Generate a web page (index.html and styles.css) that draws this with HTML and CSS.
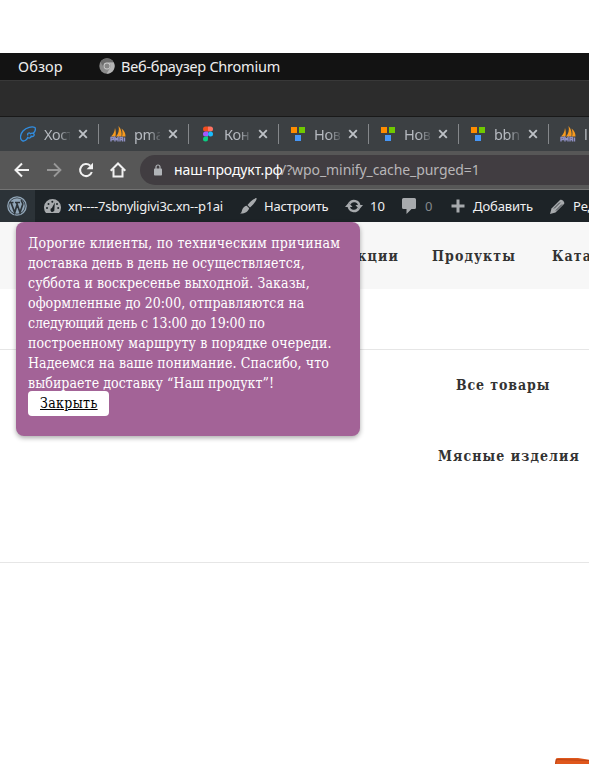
FILE: index.html
```html
<!DOCTYPE html>
<html lang="ru">
<head>
<meta charset="utf-8">
<title>Наш продукт</title>
<link rel="stylesheet" href="styles.css">
</head>
<body>
<svg width="0" height="0" class="defs">
  <symbol id="close" viewBox="0 0 10 10"><path d="M1.200 1.200 8.800 8.800M8.800 1.200 1.200 8.800" stroke="#bdc1c6" stroke-width="1.900"/></symbol>
  <symbol id="blocks" viewBox="0 0 16 16"><path fill="#ff8c00" d="M1 1h6v6H1z"/><path fill="#70c900" d="M9 1h6v6H9z"/><path fill="#4696f5" d="M5 9h6v6H5z"/></symbol>
  <symbol id="pma" viewBox="0 0 16 16"><path fill="#f79a1e" d="M1 10.500C3.500 8 4.500 6 5 2c1 3 1 6 .5 8.500zM6 10.500C8.500 8 9.500 4 8.500 0c3 3 3.500 7 3 10.500zM12 10.500c.8-3 .6-5-.5-8 3 2 4 5 4 8z"/><path d="M1 15.500V11.500h2.500v2H1m4 2V11.500l1.500 2L8 11.500v4m2 0v-4h2.500v4M10 13.500h2.500M14.500 11.500v4" fill="none" stroke="#8f8fc4" stroke-width="1.400"/></symbol>
</svg>
<header class="desktop">
  <span class="overview">Обзор</span>
  <svg class="chromium" viewBox="0 0 16 16"><circle cx="8" cy="8" r="7.700" fill="#8b8b8b"/><path fill="#6c6c6c" d="M1.400 4A7.700 7.700 0 0 1 14.700 4.500H8A3.500 3.500 0 0 0 4.800 9.500z"/><path fill="#b5b5b5" d="M14.700 4.500A7.700 7.700 0 0 1 7.600 15.700L11 10A3.500 3.500 0 0 0 9 4.500z"/><circle cx="8" cy="8" r="3.400" fill="#ccc"/><circle cx="8" cy="8" r="2.500" fill="#858585"/></svg>
  <span class="app">Веб-браузер Chromium</span>
</header>
<div class="titlebar"></div>
<div class="tabs">
  <div class="tab"><svg class="fav" viewBox="0 0 16 16"><path fill="none" stroke="#318ee2" stroke-width="1.300" stroke-linejoin="round" d="M8 9.500C6.800 7.500 9 6 10.500 7.800 12 6.500 15 7.500 14 9.500c-.6 1.200-2 1.200-3 .6.300 2-2.200 2.600-3.200 1.200C7 14 4.500 15.500 2.500 14.800-.5 13.500 0 8.500 3 5c3.500-3.800 9-4.800 12-3.500.8 2-.2 4.500-1.700 5.800"/></svg><span class="name">Хост</span><svg class="x"><use href="#close"/></svg></div>
  <div class="tab"><svg class="fav"><use href="#pma"/></svg><span class="name">pma</span><svg class="x"><use href="#close"/></svg></div>
  <div class="tab"><svg class="fav" viewBox="0 0 16 16"><path fill="#f24e1e" d="M8 .5H5.500a2.500 2.500 0 0 0 0 5H8z"/><path fill="#ff7262" d="M8 .5h2.500a2.500 2.500 0 0 1 0 5H8z"/><path fill="#a259ff" d="M8 5.500H5.500a2.500 2.500 0 0 0 0 5H8z"/><circle cx="10.500" cy="8" r="2.500" fill="#1abcfe"/><path fill="#0acf83" d="M8 10.500H5.500A2.500 2.500 0 1 0 8 13z"/></svg><span class="name">Кон</span><svg class="x"><use href="#close"/></svg></div>
  <div class="tab"><svg class="fav"><use href="#blocks"/></svg><span class="name">Нов</span><svg class="x"><use href="#close"/></svg></div>
  <div class="tab"><svg class="fav"><use href="#blocks"/></svg><span class="name">Нов</span><svg class="x"><use href="#close"/></svg></div>
  <div class="tab"><svg class="fav"><use href="#blocks"/></svg><span class="name">bbn</span><svg class="x"><use href="#close"/></svg></div>
  <div class="tab"><svg class="fav"><use href="#pma"/></svg><span class="name">l</span></div>
</div>
<div class="toolbar">
  <svg class="tool" viewBox="0 0 16 16"><path d="M15 8H2M8 1.500 1.500 8 8 14.500" fill="none" stroke="#f1f1f1" stroke-width="2"/></svg>
  <svg class="tool" viewBox="0 0 16 16"><path d="M1 8h13M8 1.500 14.500 8 8 14.500" fill="none" stroke="#989898" stroke-width="1.800"/></svg>
  <svg class="tool" viewBox="0 0 16 16"><path d="M13.800 10A6 6 0 1 1 12.300 3.800" fill="none" stroke="#f1f1f1" stroke-width="2"/><path fill="#f1f1f1" d="M15 .8v6.400H8.600z"/></svg>
  <svg class="tool" viewBox="0 0 16 16"><path d="M.7 8.700 8 1.500l7.300 7.200M3.500 7v7.500h9V7" fill="none" stroke="#f1f1f1" stroke-width="2"/></svg>
  <div class="address"><svg class="lock" viewBox="0 0 8 12"><rect y="4.500" width="8" height="7" rx=".8" fill="#b1b4b8"/><path d="M2 5V3a2 2 0 0 1 4 0v2" fill="none" stroke="#b1b4b8" stroke-width="1.200"/></svg><span class="host">наш-продукт.рф</span><span class="path">/?wpo_minify_cache_purged=1</span></div>
</div>
<nav class="admin">
  <div class="wp"><svg viewBox="0 0 20 20"><circle cx="10" cy="10" r="9.200" fill="none" stroke="#91a6b8" stroke-width="1.300"/><circle cx="10" cy="10" r="7.800" fill="#91a6b8"/><path d="M2.500 6.500h4M8 6.500h5M4 6.500l3.700 10L10 9M9.500 6.500l3.500 10 2.700-8c.5-2-1.700-2.300-1.200-4.500" fill="none" stroke="#2c3338" stroke-width="1.700"/></svg></div>
  <svg class="gauge" viewBox="0 0 17 14"><path fill="#a7aaad" d="M2 14A8.500 8.500 0 1 1 15 14z"/><path fill="#1d2327" d="m10.800 3.500-.4 7a2 2 0 1 1-2.500-1.500z"/><g fill="#1d2327"><circle cx="3" cy="9" r="1"/><circle cx="4.500" cy="5" r="1"/><circle cx="8.300" cy="2.700" r="1"/><circle cx="13" cy="5" r="1"/><circle cx="14.200" cy="9" r="1"/></g></svg>
  <span class="site">xn----7sbnyligivi3c.xn--p1ai</span>
  <svg class="brush" viewBox="0 0 17 16"><path fill="#a7aaad" d="M16.500.3c1 1-3.500 7-6.500 9.200L7.500 7C10 3.500 15.500-.8 16.500.3M6.700 7.800l2.500 2.500C8 14 4 16 0 15.500c2-1 1.500-2.500 2.500-4.500 1-2 2.500-3 4.200-3.200"/></svg>
  <span class="customize">Настроить</span>
  <svg class="update" viewBox="0 0 18 14"><path fill="none" stroke="#a7aaad" stroke-width="2.400" d="M4.500 4.500A5.300 5.300 0 0 1 14.300 7M13.500 9.500A5.300 5.300 0 0 1 3.700 7"/><path fill="#a7aaad" d="M10.500 6H18l-3.800 4.500zM0 8h7.500L3.800 3.500z"/></svg>
  <span class="count">10</span>
  <svg class="comment" viewBox="0 0 14 16"><path fill="#a7aaad" d="M1.500 0h11A1.500 1.500 0 0 1 14 1.500v8a1.500 1.500 0 0 1-1.500 1.500H9.500L4.500 16v-5h-3A1.500 1.500 0 0 1 0 9.500v-8A1.500 1.500 0 0 1 1.500 0"/></svg>
  <span class="zero">0</span>
  <svg class="plus" viewBox="0 0 14 14"><path stroke="#a7aaad" stroke-width="3" d="M7 .5v13M.5 7h13"/></svg>
  <span class="add">Добавить</span>
  <svg class="pencil" viewBox="0 0 15 15"><path fill="#a7aaad" d="M10 1c1.500-1.500 5.500 2 4 4L5.500 13.500 0 15l1.500-5.500z"/><path d="m4 9.500 6-6m-4 8 6-6" stroke="#1d2327" stroke-width=".8"/></svg>
  <span class="edit">Ред</span>
</nav>
<main class="site-page">
  <nav class="menu"><a class="promo">Акции</a><a class="products">Продукты</a><a class="catalog">Каталог</a></nav>
  <div class="spacer"></div>
  <section class="categories"><a class="all">Все товары</a><a class="meat">Мясные изделия</a></section>
  <section class="goods"><svg viewBox="0 0 35 7"><path fill="#df571c" d="M0 7 .8 2Q1 1 3 1h20l12 2v4z"/><path fill="#bd4515" d="M0 7 1 2l33 1v1L2 3 1 7z"/></svg></section>
  <aside class="notice">
    <p><span class="l1">Дорогие клиенты, по техническим причинам</span><span class="l2">доставка день в день не осуществляется,</span><span class="l3">суббота и воскресенье выходной. Заказы,</span><span class="l4">оформленные до 20:00, отправляются на</span><span class="l5">следующий день с 13:00 до 19:00 по</span><span class="l6">построенному маршруту в порядке очереди.</span><span class="l7">Надеемся на ваше понимание. Спасибо, что</span><span class="l8">выбираете доставку “Наш продукт”!</span></p>
    <a class="dismiss">Закрыть</a>
  </aside>
</main>
</body>
</html>
```
FILE: styles.css
```css
* { box-sizing: border-box; }
body { margin: 0; padding-top: 53px; width: 589px; height: 764px; overflow: hidden; background: #fff; font-family: "Noto Sans", sans-serif; white-space: nowrap; }
.defs { position: absolute; }
svg { flex: none; display: block; }
.desktop { height: 28px; display: flex; align-items: center; padding-left: 18px; background: #131313; border-bottom: 1px solid #383838; color: #eee; font-size: 14.500px; }
.desktop span { padding-bottom: 2px; }
.overview { width: 81px; letter-spacing: .1px; }
.app { letter-spacing: -.23px; }
.chromium { width: 16px; height: 16px; margin: -2px 6px 0 0; }
.titlebar { height: 36px; background: #2c2c2c; border-bottom: 1px solid #191919; }
.tabs { height: 34px; display: flex; padding-left: 9px; background: #3c4043; overflow: hidden; }
.tab { width: 90px; flex: none; display: flex; align-items: center; padding-left: 11px; position: relative; }
.tab::after { content: ""; position: absolute; right: 0; top: 7px; width: 1px; height: 20px; background: #85888b; }
.fav { width: 16px; height: 16px; margin-right: 8px; }
.name { width: 26px; overflow: hidden; color: #b6bac0; font-size: 14.500px; letter-spacing: -.3px; -webkit-mask-image: linear-gradient(90deg, #000 55%, #0003); mask-image: linear-gradient(90deg, #000 55%, #0003); }
.x { width: 10px; height: 10px; margin-left: 8px; }
.toolbar { height: 39px; display: flex; align-items: center; padding-left: 14px; background: #575757; border-bottom: 1px solid #737373; }
.tool { width: 16px; height: 16px; margin-right: 16px; }
.address { margin-left: -2px; height: 30px; width: 449px; flex: none; display: flex; align-items: center; padding-left: 14px; border-radius: 15px 0 0 15px; background: #413d41; font-size: 14px; }
.address span { padding-bottom: 2px; }
.lock { width: 8px; height: 12px; margin-right: 12px; }
.host { color: #fff; width: 107px; letter-spacing: -.1px; }
.path { color: #b8b6b8; letter-spacing: -.08px; }
.admin { height: 32px; display: flex; align-items: center; background: #1d2327; color: #f0f0f1; font-size: 13px; overflow: hidden; }
.admin > * { flex: none; }
.wp { width: 35px; height: 32px; padding: 6px 0 0 7px; background: #2c3338; margin-right: 9px; }
.wp svg { width: 20px; height: 20px; }
.gauge { width: 17px; height: 14px; margin-right: 7px; }
.site { width: 172px; letter-spacing: -.27px; }
.brush { width: 17px; height: 16px; margin-right: 7px; }
.customize { width: 81px; letter-spacing: -.2px; }
.update { width: 18px; height: 14px; margin-right: 7px; }
.count { width: 32px; }
.comment { width: 14px; height: 16px; margin-right: 9px; }
.zero { width: 26px; color: #83878b; }
.plus { width: 14px; height: 14px; margin-right: 8px; }
.add { width: 77px; letter-spacing: -.1px; }
.pencil { width: 15px; height: 15px; margin-right: 8px; }
.site-page { position: relative; font-family: "DejaVu Serif", serif; }
.menu { height: 67px; display: flex; align-items: center; background: #f7f7f7; padding-left: 346px; overflow: hidden; }
.menu a, .categories a { flex: none; color: #333; font-weight: 700; font-size: 14px; letter-spacing: 1.100px; font-stretch: condensed; font-family: "DejaVu Serif Condensed", "DejaVu Serif", serif; }
.promo { width: 86px; }
.products { width: 120px; }
.spacer { height: 61px; border-bottom: 1px solid #e6e6e6; }
.categories { height: 213px; padding: 23px 0 0 438px; border-bottom: 1px solid #e6e6e6; display: flex; flex-direction: column; }
.categories a { height: 24px; line-height: 24px; }
.categories .all { margin: 0 0 47px 18px; letter-spacing: .9px; }
.goods { height: 201px; display: flex; align-items: flex-end; padding-left: 555px; }
.goods svg { width: 35px; height: 7px; }
.notice { position: absolute; left: 16px; top: 0; width: 344px; height: 214px; padding: 11px 12px; border-radius: 8px; background: #a36397; color: #fff; box-shadow: 0 2px 5px #0005; font: 14px/20px "DejaVu Serif Condensed", "DejaVu Serif", serif; font-stretch: condensed; }
.notice p { margin: 0; }
.notice p span { display: block; width: max-content; }
.notice .l1 { letter-spacing: .22px; }
.notice .l2, .notice .l4 { letter-spacing: .05px; }
.notice .l3, .notice .l7 { letter-spacing: .1px; }
.notice .l5 { letter-spacing: -.17px; }
.notice .l6 { letter-spacing: .12px; }
.notice .l8 { letter-spacing: .07px; }
.dismiss { display: block; position: relative; width: 81px; height: 25px; margin-top: -2px; padding-left: 12px; line-height: 25px; letter-spacing: .35px; border-radius: 4px; background: #fff; color: #000; text-decoration: underline; }
```
